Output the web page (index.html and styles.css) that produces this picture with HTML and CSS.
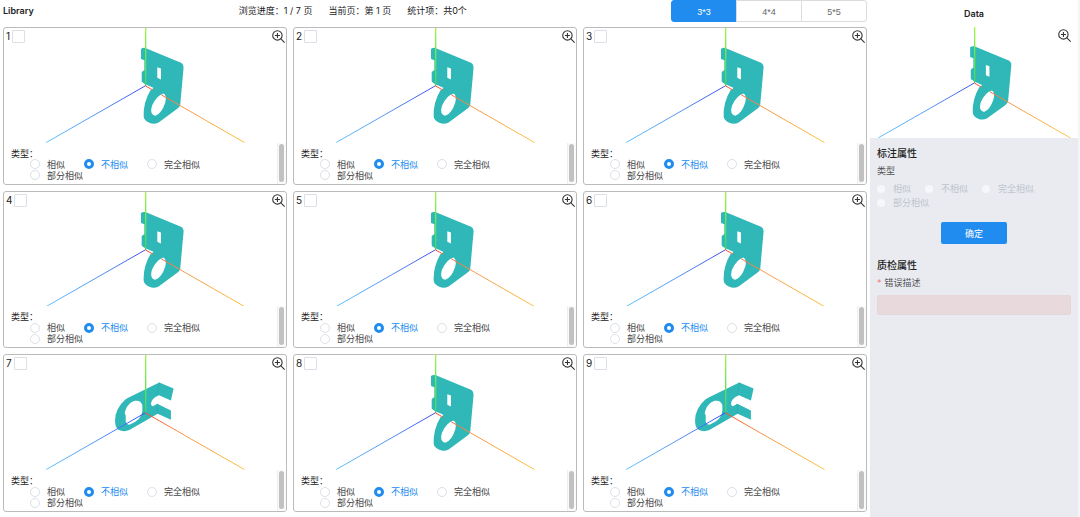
FILE: index.html
```
<!DOCTYPE html>
<html lang="zh-CN">
<head>
  <meta charset="UTF-8" />
  <meta name="viewport" content="width=device-width, initial-scale=1.0"/>
  <title>Library</title>
  <link rel="stylesheet" href="styles.css">
</head>
<body>
  <svg class="defs" aria-hidden="true">
    <defs>
      <linearGradient id="gradX" gradientUnits="userSpaceOnUse" x1="436" y1="0" x2="735" y2="0">
        <stop offset="0" stop-color="#ff4a2a"/>
        <stop offset="0.4" stop-color="#f79a4a"/>
        <stop offset="1" stop-color="#fcc23c"/>
      </linearGradient>
      <linearGradient id="gradZ" gradientUnits="userSpaceOnUse" x1="436" y1="0" x2="137" y2="0">
        <stop offset="0" stop-color="#3a4cf0"/>
        <stop offset="0.5" stop-color="#5596fa"/>
        <stop offset="1" stop-color="#5cc4fb"/>
      </linearGradient>
      <linearGradient id="gradY" gradientUnits="userSpaceOnUse" x1="0" y1="258" x2="0" y2="84">
        <stop offset="0" stop-color="#3fd860"/>
        <stop offset="0.5" stop-color="#66e850"/>
        <stop offset="1" stop-color="#a2f545"/>
      </linearGradient>
    </defs>

    <symbol id="plate" viewBox="12 84 846 345">
      <path fill="#30b8b9" fill-rule="evenodd" d="M423 147Q427 143 436 144L545 189Q552 194 551 204L541 315Q540 322 532 327L476 368Q462 375 448 369Q432 362 431 350Q429 308 453 268L436 253L428 248Q424 245 425 241V218Q426 213 433 211V181L423 177ZM472 202V234L483 239V206ZM491 281Q470 286 456 318Q448 344 466 348Q485 342 496 308Q501 287 491 281Z"/>
      <path fill="#fff" d="M438 254L460 264L455 271L438 260Z"/>
      <rect fill="url(#gradY)" x="435" y="84" width="4" height="174"/>
      <path class="line" stroke="url(#gradZ)" d="M436 258L137 429"/>
      <path class="line" stroke="url(#gradX)" d="M436 258L459 271M484 285L735 429"/>
    </symbol>

    <symbol id="hook" viewBox="12 84 846 345">
      <path fill="#30b8b9" fill-rule="evenodd" d="M345 281Q345 246 375 219Q382 213 392 209L478 167L521 185L513 221L477 205Q453 215 453 231Q454 239 459 238L472 231L513 251V279L473 261L388 310Q371 317 355 309Q344 300 345 281ZM376 251L374 260L377 265V284Q379 293 388 294Q426 279 427 252V235Q422 219 404 222Q382 230 376 251Z"/>
      <path stroke="#2aa9ac" stroke-width="2" d="M478 167L472 203M472 232V260"/>
      <rect fill="url(#gradY)" x="435" y="84" width="4" height="174"/>
      <path class="line" stroke="url(#gradZ)" d="M436 258L137 429"/>
      <path class="line" stroke="url(#gradX)" d="M436 258L735 429"/>
    </symbol>

    <symbol id="zoomIn" viewBox="0 0 36 36">
      <g fill="none" stroke="#333" stroke-width="3">
        <circle cx="15" cy="15" r="13"/>
        <path d="M24 24L35 35M15 8V22M8 15H22"/>
      </g>
    </symbol>
  </svg>

  <main class="library">
    <header class="toolbar">
      <h1>Library</h1>
      <div class="stats">
        <span>浏览进度：1 / 7 页</span>
        <span>当前页：第 1 页</span>
        <span>统计项：共0个</span>
      </div>
      <div class="layout-switch">
        <button type="button" class="active">3*3</button>
        <button type="button">4*4</button>
        <button type="button">5*5</button>
      </div>
    </header>
    <div class="grid" id="grid"></div>
  </main>

  <aside class="side">
    <h2 class="side-title">Data</h2>
    <div class="side-view">
      <svg class="model"><use href="#plate"/></svg>
      <button type="button" class="zoom-btn" aria-label="放大"><svg><use href="#zoomIn"/></svg></button>
    </div>
    <form class="side-form">
      <h3>标注属性</h3>
      <p class="field-name">类型</p>
      <div class="options">
        <label><input type="radio" name="sideType" disabled>相似</label>
        <label><input type="radio" name="sideType" disabled>不相似</label>
        <label><input type="radio" name="sideType" disabled>完全相似</label>
        <label><input type="radio" name="sideType" disabled>部分相似</label>
      </div>
      <button type="button" class="confirm">确定</button>
      <h3>质检属性</h3>
      <label class="field-name" for="errorDesc"><span class="star">*</span>错误描述</label>
      <input type="text" id="errorDesc" class="error-input">
    </form>
  </aside>

  <script>
    const models = ["plate", "plate", "plate", "plate", "plate", "plate", "hook", "plate", "hook"];
    const types = ["相似", "不相似", "完全相似", "部分相似"];

    document.getElementById("grid").innerHTML = models.map((model, i) => `
      <section class="card">
        <div class="view">
          <svg class="model"><use href="#${model}"/></svg>
          <label class="pick">${i + 1}<input type="checkbox"></label>
          <button type="button" class="zoom-btn" aria-label="放大"><svg><use href="#zoomIn"/></svg></button>
        </div>
        <div class="card-form">
          <div class="fields">
            <p>类型：</p>
            <div class="options">
              ${types.map((t, n) => `<label><input type="radio" name="type${i}"${n === 1 ? " checked" : ""}><span>${t}</span></label>`).join("")}
            </div>
          </div>
          <div class="scrollbar"></div>
        </div>
      </section>`).join("");
  </script>
</body>
</html>
```
FILE: styles.css
```
* {
  box-sizing: border-box;
}

body {
  margin: 0;
  min-height: 100vh;
  display: flex;
  background: #fff;
  font-family: Inter, "Noto Sans CJK SC", sans-serif;
  font-size: 9px;
  line-height: 11px;
  color: #222;
}

h1, h2, h3, p {
  margin: 0;
}

button, input {
  margin: 0;
  font: inherit;
}

button {
  padding: 0;
  cursor: pointer;
}

.defs {
  position: absolute;
  width: 0;
  height: 0;
}

.line {
  fill: none;
  stroke-width: 3;
}

.library {
  flex: 1;
  display: flex;
  flex-direction: column;
  padding: 0 3px 5px;
}

.toolbar {
  display: flex;
  justify-content: space-between;
  height: 27px;
  line-height: 22px;
}

.toolbar h1 {
  font-size: 9px;
  font-weight: 600;
  line-height: 22px;
}

.stats {
  display: flex;
  gap: 16px;
}

.layout-switch {
  display: flex;
}

.layout-switch button {
  width: 66px;
  height: 22px;
  margin-left: -1px;
  border: 1px solid #dcdcdc;
  background: #fff;
  font-family: "Liberation Sans", sans-serif;
  color: #666;
}

.layout-switch button:first-child {
  border-radius: 3px 0 0 3px;
}

.layout-switch button:last-child {
  border-radius: 0 3px 3px 0;
}

.layout-switch .active {
  background: #208cf0;
  border-color: #208cf0;
  color: #fff;
}

.grid {
  flex: 1;
  display: grid;
  grid-template-columns: repeat(3, 1fr);
  grid-template-rows: repeat(3, 1fr);
  gap: 6px;
}

.card {
  display: flex;
  flex-direction: column;
  border: 1px solid #bbb;
  border-radius: 3px;
  overflow: hidden;
}

.view {
  position: relative;
  flex: 1;
  min-height: 100px;
}

.model {
  position: absolute;
  width: 100%;
  height: 100%;
}

.pick {
  position: absolute;
  top: 2px;
  left: 2px;
  display: flex;
  align-items: center;
  gap: 2px;
  font-size: 10px;
}

.pick input {
  appearance: none;
  width: 13px;
  height: 13px;
  border: 1px solid #dcdfe6;
  border-radius: 1px;
  background: #fff;
}

.zoom-btn {
  position: absolute;
  top: 2px;
  right: 1px;
  width: 13px;
  height: 13px;
  border: none;
  background: none;
}

.zoom-btn svg {
  display: block;
  width: 13px;
  height: 13px;
}

.card-form {
  display: flex;
  height: 41px;
}

.fields {
  flex: 1;
  padding: 5px 0 0 7px;
}

.options {
  display: flex;
  flex-wrap: wrap;
}

.options label {
  display: flex;
  align-items: center;
}

.options input {
  appearance: none;
  border-radius: 50%;
  background: #fff;
}

.fields .options {
  padding: 0 20px 0 19px;
  color: #444;
}

.fields label {
  gap: 7px;
  margin-right: 19px;
}

.fields .options input {
  width: 10px;
  height: 10px;
  border: 1px solid #dcdfe6;
}

.fields .options input:checked {
  border: 3px solid #208cf0;
}

.fields input:checked + span {
  color: #208cf0;
}

.scrollbar {
  width: 9px;
  padding: 1px 2px 2px 1px;
  border-left: 1px solid #eee;
  background: #fafafa;
}

.scrollbar::before {
  content: "";
  display: block;
  width: 5px;
  height: 100%;
  border-radius: 3px;
  background: #c1c1c1;
}

.side {
  width: 210px;
  display: flex;
  flex-direction: column;
  border-right: 2px solid #f5f5f7;
}

.side-title {
  height: 27px;
  line-height: 27px;
  font-size: 9px;
  font-weight: 600;
  text-align: center;
}

/* the model is wider than the panel, only its empty margins are cut */
.side-view {
  position: relative;
  display: flex;
  justify-content: center;
  height: 111px;
  overflow: hidden;
}

.side-view .model {
  position: static;
  flex: none;
  width: 272px;
}

.side-view .zoom-btn {
  right: 7px;
}

.side-form {
  flex: 1;
  display: flex;
  flex-direction: column;
  padding: 7px;
  background: #e9ebf1;
}

.side-form h3 {
  font-size: 10px;
  font-weight: 500;
  line-height: 16px;
}

.field-name {
  margin-top: 2px;
  line-height: 16px;
  color: #555;
}

.side-form .options {
  margin-top: 3px;
  line-height: 14px;
  color: #c0c4cc;
}

.side-form .options label {
  gap: 8px;
  margin-right: 14px;
}

.side-form .options input {
  width: 8px;
  height: 8px;
  background: #f5f7fa;
}

.confirm {
  align-self: center;
  width: 66px;
  height: 22px;
  margin: 12px 0 13px;
  border: none;
  border-radius: 2px;
  background: #208cf0;
  color: #fff;
}

.star {
  margin-right: 3px;
  color: #f08080;
}

.error-input {
  width: 100%;
  height: 20px;
  margin-top: 4px;
  padding: 0 6px;
  border: 1px solid #e6d6da;
  border-radius: 2px;
  background: #e8dadc;
}
```
